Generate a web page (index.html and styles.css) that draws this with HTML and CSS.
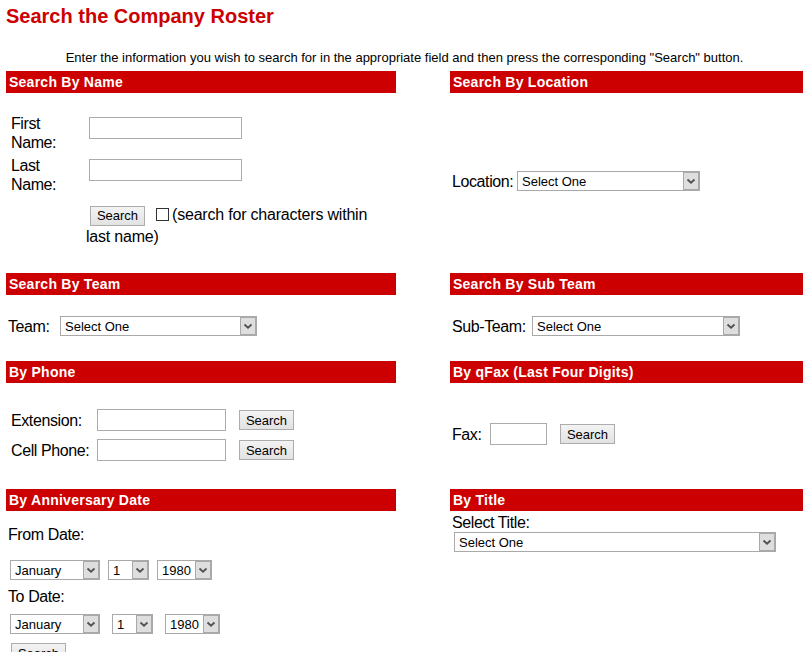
FILE: index.html
```html
<!DOCTYPE html>
<html>
<head>
	<meta charset="utf-8">
	<title>Search the Company Roster</title>
	<link rel="stylesheet" href="styles.css">
</head>
<body>
	<h1 class="page-title">Search the Company Roster</h1>
	<p class="intro">Enter the information you wish to search for in the appropriate field and then press the corresponding "Search" button.</p>

	<div class="roster">
		<!-- name -->
		<div class="panel">
			<div class="panel-head">Search By Name</div>
			<div class="panel-body name-body">
				<div class="name-grid">
					<label class="lbl">First<br>Name:</label>
					<input type="text" class="text-box name-box">
					<label class="lbl">Last<br>Name:</label>
					<input type="text" class="text-box name-box">
				</div>
				<div class="name-options"><button class="btn btn-first">Search</button><input type="checkbox" class="check">(search for characters within last name)</div>
			</div>
		</div>

		<!-- location -->
		<div class="panel">
			<div class="panel-head">Search By Location</div>
			<div class="panel-body centered">
				<label class="lbl lbl-location">Location:</label>
				<select class="drop drop-location"><option>Select One</option></select>
			</div>
		</div>

		<!-- team -->
		<div class="panel">
			<div class="panel-head">Search By Team</div>
			<div class="panel-body team-body">
				<label class="lbl lbl-team">Team:</label>
				<select class="drop drop-team"><option>Select One</option></select>
			</div>
		</div>

		<div class="panel">
			<div class="panel-head">Search By Sub Team</div>
			<div class="panel-body team-body">
				<label class="lbl lbl-subteam">Sub-Team:</label>
				<select class="drop drop-subteam"><option>Select One</option></select>
			</div>
		</div>

		<!-- phone / fax -->
		<div class="panel">
			<div class="panel-head">By Phone</div>
			<div class="panel-body phone-body">
				<div class="phone-grid">
					<label class="lbl">Extension:</label>
					<input type="text" class="text-box phone-box">
					<button class="btn btn-side">Search</button>
					<label class="lbl">Cell Phone:</label>
					<input type="text" class="text-box phone-box">
					<button class="btn btn-side">Search</button>
				</div>
			</div>
		</div>

		<div class="panel">
			<div class="panel-head">By qFax (Last Four Digits)</div>
			<div class="panel-body centered">
				<label class="lbl lbl-fax">Fax:</label>
				<input type="text" class="text-box fax-box">
				<button class="btn btn-side">Search</button>
			</div>
		</div>

		<!-- dates / title -->
		<div class="panel">
			<div class="panel-head">By Anniversary Date</div>
			<div class="panel-body date-body">
				<div class="lbl">From Date:</div>
				<div class="date-row date-from">
					<select class="drop drop-month"><option>January</option></select>
					<select class="drop drop-day"><option>1</option></select>
					<select class="drop drop-year"><option>1980</option></select>
				</div>
				<div class="lbl date-label-to">To Date:</div>
				<div class="date-row date-to">
					<select class="drop drop-month"><option>January</option></select>
					<select class="drop drop-day"><option>1</option></select>
					<select class="drop drop-year"><option>1980</option></select>
				</div>
				<button class="btn btn-date">Search</button>
			</div>
		</div>

		<div class="panel">
			<div class="panel-head">By Title</div>
			<div class="panel-body title-body">
				<div class="lbl">Select Title:</div>
				<select class="drop drop-title"><option>Select One</option></select>
			</div>
		</div>
	</div>
</body>
</html>
```

FILE: styles.css
```css
*
{
	box-sizing: border-box;
}
body
{
	margin: 0px;
	padding: 0px 2px 0px 6px;
	font-family: "Liberation Sans", Arial, sans-serif;
	font-size: 16px;
	color: #000000;
	background-color: #FFFFFF;
}
.page-title
{
	margin: 5px 0px 0px 0px;
	font-size: 20px;
	line-height: 23px;
	font-weight: bold;
	color: #CC0000;
}
.intro
{
	margin: 22px 0px 6px 0px;
	font-size: 13px;
	line-height: 15px;
	text-align: center;
}

/* two column grid of sections */
.roster
{
	display: grid;
	grid-template-columns: 390px 353px;
	column-gap: 54px;
}
.panel
{
	display: flex;
	flex-direction: column;
}
.panel-head
{
	height: 22px;
	line-height: 22px;
	padding-left: 3px;
	background-color: #CC0000;
	color: #FFFFFF;
	font-size: 14px;
	font-weight: bold;
	letter-spacing: 0.25px;
}
.panel-body
{
	flex: 1;
}
.centered
{
	display: flex;
	align-items: center;
	padding: 0px 0px 4px 2px;
}
.lbl
{
	line-height: 19px;
	letter-spacing: -0.4px;
}

/* controls */
.text-box
{
	height: 22px;
	margin: 0px;
	border: 1px solid #ABABAB;
	background: #FFFFFF;
}
.btn
{
	height: 20px;
	width: 55px;
	padding: 0px;
	margin: 0px;
	border: 1px solid #ACACAC;
	background: linear-gradient(#F3F3F3, #E2E2E2);
	font-family: "Liberation Sans", Arial, sans-serif;
	font-size: 13px;
	letter-spacing: 0px;
	color: #000000;
}
.drop
{
	-webkit-appearance: none;
	appearance: none;
	height: 20px;
	margin: 0px;
	padding: 0px 0px 0px 4px;
	border: 1px solid #A9A9A9;
	border-radius: 0px;
	font-family: "Liberation Sans", Arial, sans-serif;
	font-size: 13px;
	color: #000000;
	background: #FFFFFF url("data:image/svg+xml,%3Csvg xmlns='http://www.w3.org/2000/svg' width='17' height='18'%3E%3Crect x='1' y='0' width='16' height='18' fill='%23A9A9A9'/%3E%3Crect x='2' y='1' width='14' height='16' fill='%23DEDEDE'/%3E%3Cpath d='M5.5 7.5l3.5 3.2 3.5-3.2' fill='none' stroke='%23505050' stroke-width='1.8'/%3E%3C/svg%3E") no-repeat right top;
}
.check
{
	-webkit-appearance: none;
	appearance: none;
	width: 13px;
	height: 13px;
	margin: 0px 3px 0px 11px;
	border: 1px solid #333333;
	background: #FFFFFF;
	vertical-align: -1px;
}

/* name */
.name-body
{
	padding: 21px 0px 25px 5px;
}
.name-grid
{
	display: grid;
	grid-template-columns: 78px 153px;
	row-gap: 4px;
}
.name-box
{
	margin-top: 3px;
	width: 153px;
}
.name-options
{
	width: 290px;
	margin: 10px 0px 0px 75px;
	line-height: 22px;
	letter-spacing: -0.2px;
}
.btn-first
{
	margin-left: 4px;
	vertical-align: middle;
}

/* location / team */
.lbl-location
{
	width: 65px;
}
.drop-location
{
	width: 183px;
}
.team-body
{
	display: flex;
	align-items: center;
	padding: 21px 0px 25px 2px;
}
.lbl-team
{
	width: 52px;
}
.drop-team
{
	width: 197px;
}
.lbl-subteam
{
	width: 80px;
}
.drop-subteam
{
	width: 208px;
}

/* phone / fax */
.phone-body
{
	padding: 26px 0px 28px 5px;
}
.phone-grid
{
	display: grid;
	grid-template-columns: 86px 129px 68px;
	row-gap: 8px;
	align-items: center;
}
.phone-box
{
	width: 129px;
}
.btn-side
{
	margin-left: 13px;
}
.lbl-fax
{
	width: 38px;
}
.fax-box
{
	width: 57px;
}

/* dates */
.date-body
{
	padding: 14px 0px 0px 2px;
}
.date-label-to
{
	margin-top: 7px;
}
.date-row
{
	display: flex;
	gap: 8px;
	margin: 16px 0px 0px 2px;
}
.date-to
{
	gap: 12px;
	margin-top: 8px;
}
.drop-month
{
	width: 90px;
}
.drop-day
{
	width: 41px;
}
.drop-year
{
	width: 55px;
}
.btn-date
{
	margin: 9px 0px 0px 3px;
}

/* title */
.title-body
{
	padding: 2px 0px 0px 2px;
}
.drop-title
{
	width: 322px;
	margin-left: 2px;
}
```
